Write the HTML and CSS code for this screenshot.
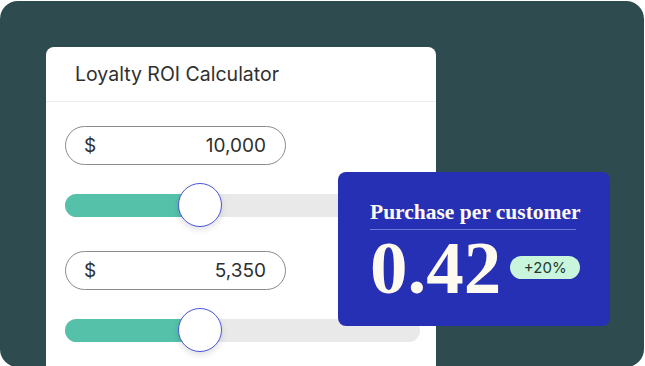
FILE: index.html
```html
<html>
<head>
  <title>Loyalty ROI Calculator</title>
  <link rel="stylesheet" href="styles.css">
</head>
<body>
  <div class="panel">
    <div class="calculator">
      <div class="calc-header">Loyalty ROI Calculator</div>
      <div class="calc-body">
        <div class="amount">
          <span class="currency">$</span>
          <span class="value">10,000</span>
        </div>
        <div class="slider">
          <div class="track">
            <div class="fill" style="width: 135px"></div>
            <div class="thumb"></div>
          </div>
        </div>
        <div class="amount">
          <span class="currency">$</span>
          <span class="value">5,350</span>
        </div>
        <div class="slider">
          <div class="track">
            <div class="fill" style="width: 135px"></div>
            <div class="thumb"></div>
          </div>
        </div>
      </div>
    </div>

    <div class="result">
      <div class="result-title">Purchase per customer</div>
      <div class="result-row">
        <span class="result-value">0.42</span>
        <span class="badge">+20%</span>
      </div>
    </div>
  </div>
</body>
</html>
```

FILE: styles.css
```css
html, body {
  margin: 0;
  padding: 0;
  height: 100%;
  overflow: hidden;
  background: #fff;
}
body {
  font-family: Inter, "Noto Sans", sans-serif;
  color: #333;
}
.panel {
  position: relative;
  margin-top: 1px;
  width: 644px;
  height: 366px;
  background: #2e4c4f;
  border-radius: 18px;
  padding: 46px 0 0 46px;
  box-sizing: border-box;
  overflow: hidden;
}
.calculator {
  width: 390px;
  height: 360px;
  background: #fff;
  border-radius: 8px;
}
.calc-header {
  height: 55px;
  padding-left: 29px;
  display: flex;
  align-items: center;
  font-size: 19.5px;
  color: #2f2f2f;
  border-bottom: 1px solid #ececec;
  box-sizing: border-box;
}
.calc-body {
  padding: 24px 0 0 19px;
  display: flex;
  flex-direction: column;
}
.amount {
  width: 221px;
  height: 39px;
  box-sizing: border-box;
  border: 1px solid #8a8a8a;
  border-radius: 20px;
  display: flex;
  align-items: center;
  justify-content: space-between;
  padding: 0 19px 0 18px;
  font-size: 19px;
  color: #2f2f2f;
}
.slider {
  height: 44px;
  margin: 18px 0 24px;
  display: flex;
  align-items: center;
}
.track {
  position: relative;
  width: 355px;
  height: 23px;
  border-radius: 12px;
  background: #e9e9e9;
}
.fill {
  height: 100%;
  border-radius: 12px 0 0 12px;
  background: #56c1a9;
}
.thumb {
  position: absolute;
  left: 113px;
  top: -11px;
  width: 44px;
  height: 44px;
  box-sizing: border-box;
  border-radius: 50%;
  background: #fff;
  border: 1px solid #4b56d6;
  box-shadow: 0 3px 6px rgba(0, 0, 0, 0.12);
}
.result {
  position: absolute;
  left: 338px;
  top: 171px;
  width: 272px;
  height: 154px;
  box-sizing: border-box;
  background: #2630b5;
  border-radius: 8px;
  padding: 25px 0 0 32px;
  color: #fffaf0;
}
.result-title {
  width: 206px;
  white-space: nowrap;
  font-family: "Liberation Serif", "DejaVu Serif", serif;
  font-weight: bold;
  font-size: 21.5px;
  line-height: 30px;
  padding-bottom: 2px;
  border-bottom: 1px solid rgba(140, 150, 230, 0.7);
}
.result-row {
  display: flex;
  align-items: center;
  gap: 9px;
}
.result-value {
  font-family: "Liberation Serif", "DejaVu Serif", serif;
  font-weight: bold;
  font-size: 75px;
  line-height: 76px;
}
.badge {
  width: 70px;
  height: 23px;
  border-radius: 12px;
  background: #c8f5dc;
  color: #23382f;
  font-size: 15px;
  display: flex;
  align-items: center;
  justify-content: center;
  margin-top: -2px;
}
```
